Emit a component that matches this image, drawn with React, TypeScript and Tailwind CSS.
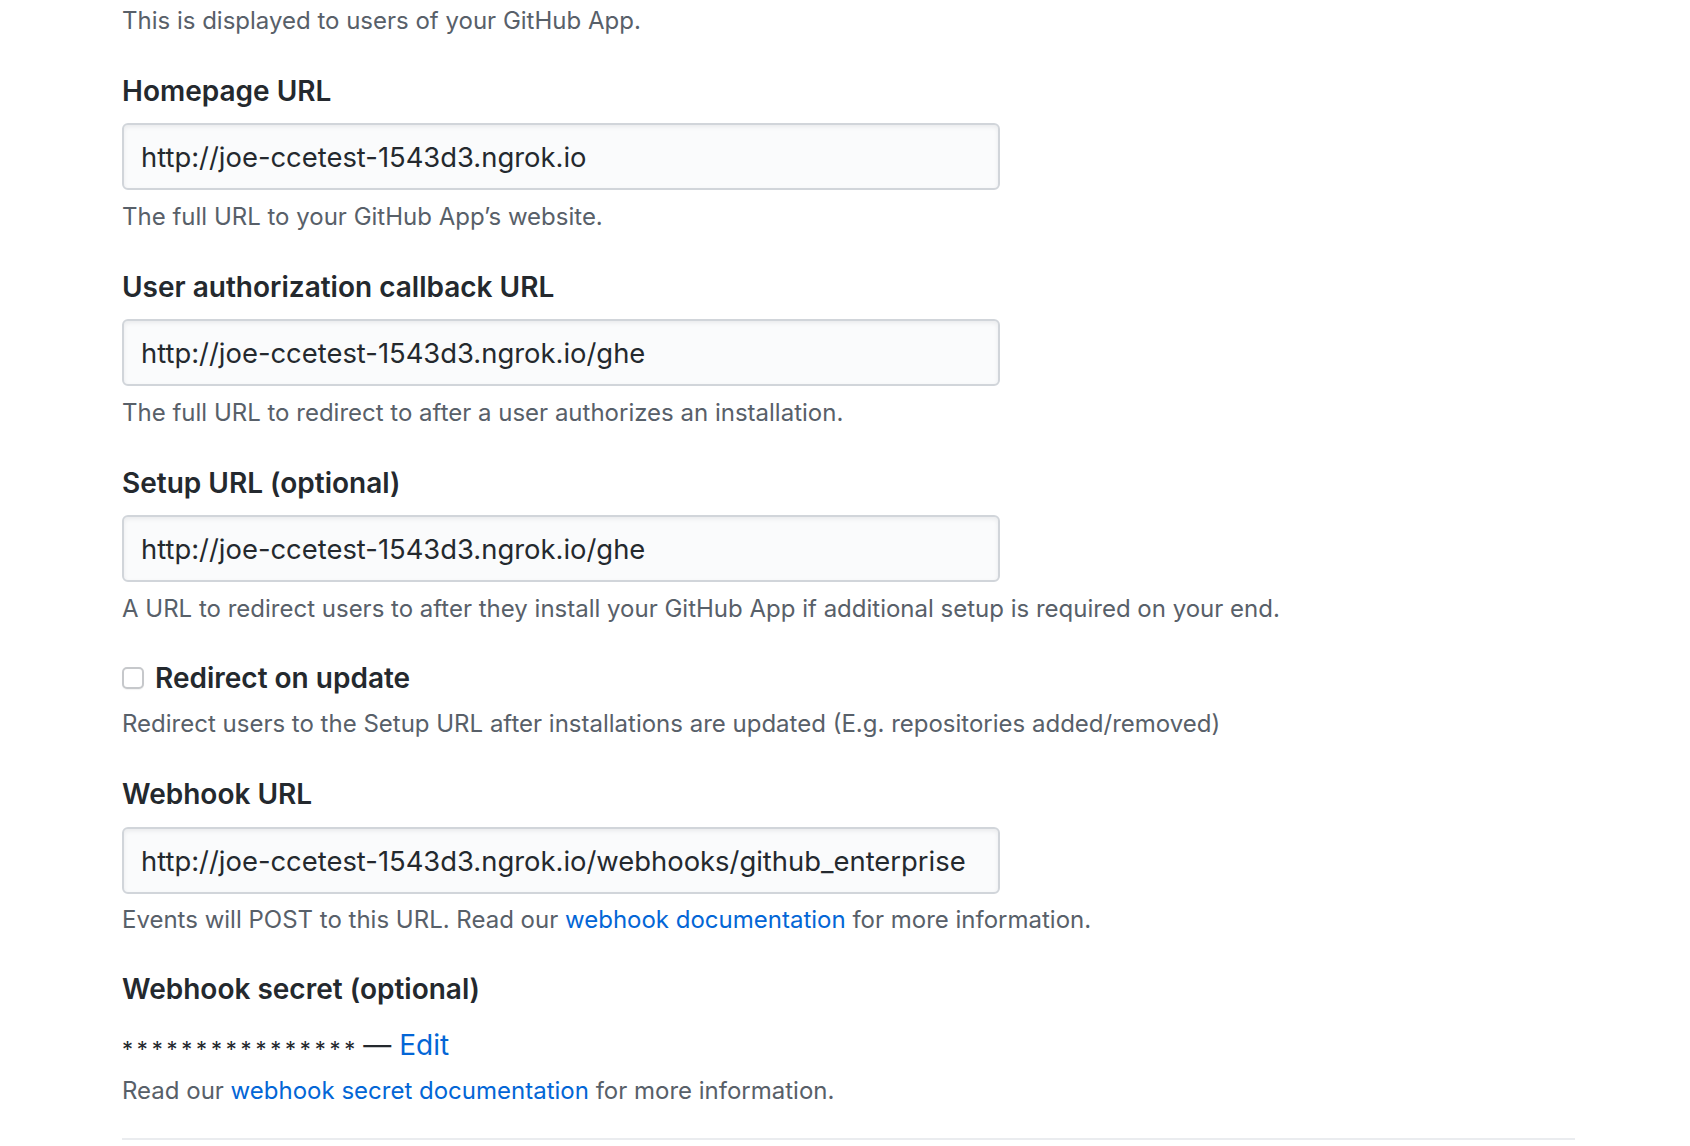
import React from "react";

interface FieldProps {
  label: string;
  value: string;
  children: React.ReactNode;
  className?: string;
}

function TextField({ label, value, children, className }: FieldProps) {
  return (
    <div className={className}>
      <label className="block text-[28px] leading-[40px] font-semibold text-[#24292e]">
        {label}
      </label>
      <input
        type="text"
        readOnly
        value={value}
        className="mt-[12px] block h-[67px] w-[878px] rounded-[6px] border-2 border-[#d1d5da] bg-[#fafbfc] px-[17px] text-[27.4px] text-[#24292e] shadow-[inset_0_2px_4px_rgba(27,31,35,0.075)] outline-none"
      />
      <p className="mt-[9px] text-[24px] leading-[36px] text-[#586069]">{children}</p>
    </div>
  );
}

export default function App() {
  return (
    <div className="min-h-screen bg-white pl-[122px] font-['Inter','Noto_Sans',sans-serif]">
      <div className="w-[1453px]">
        <p className="pt-[3px] text-[24px] leading-[36px] text-[#586069]">
          This is displayed to users of your GitHub App.
        </p>

        <TextField
          className="mt-[32px]"
          label="Homepage URL"
          value="http://joe-ccetest-1543d3.ngrok.io"
        >
          The full URL to your GitHub App’s website.
        </TextField>

        <TextField
          className="mt-[32px]"
          label="User authorization callback URL"
          value="http://joe-ccetest-1543d3.ngrok.io/ghe"
        >
          The full URL to redirect to after a user authorizes an installation.
        </TextField>

        <TextField
          className="mt-[32px]"
          label="Setup URL (optional)"
          value="http://joe-ccetest-1543d3.ngrok.io/ghe"
        >
          A URL to redirect users to after they install your GitHub App if additional setup is
          required on your end.
        </TextField>

        {/* redirect checkbox */}
        <div className="mt-[31px]">
          <label className="flex items-center gap-[11px] text-[28px] leading-[40px] font-semibold text-[#24292e]">
            <span className="h-[22px] w-[22px] rounded-[5px] border-2 border-[#c6c8cb] bg-white shadow-[0_1px_1px_rgba(0,0,0,0.05)]" />
            Redirect on update
          </label>
          <p className="mt-[8px] text-[24px] leading-[36px] text-[#586069]">
            Redirect users to the Setup URL after installations are updated (E.g. repositories
            added/removed)
          </p>
        </div>

        <div className="mt-[32px]">
          <label className="block text-[28px] leading-[40px] font-semibold text-[#24292e]">
            Webhook URL
          </label>
          <input
            type="text"
            readOnly
            value="http://joe-ccetest-1543d3.ngrok.io/webhooks/github_enterprise"
            className="mt-[13px] block h-[67px] w-[878px] rounded-[6px] border-2 border-[#d1d5da] bg-[#fafbfc] px-[17px] text-[27.4px] text-[#24292e] shadow-[inset_0_2px_4px_rgba(27,31,35,0.075)] outline-none"
          />
          <p className="mt-[8px] text-[24px] leading-[36px] text-[#586069]">
            Events will POST to this URL. Read our{" "}
            <a href="#" className="text-[#0366d6]">
              webhook documentation
            </a>{" "}
            for more information.
          </p>
        </div>

        <div className="mt-[31px]">
          <label className="block text-[28px] leading-[40px] font-semibold text-[#24292e]">
            Webhook secret (optional)
          </label>
          <div className="mt-[16px] flex items-center text-[28px] leading-[40px] text-[#24292e]">
            <span className="translate-y-[4px] text-[22px] tracking-[3.8px]">****************</span>
            <span className="ml-[4px]">—</span>
            <a href="#" className="ml-[8px] text-[#0366d6]">
              Edit
            </a>
          </div>
          <p className="mt-[8px] text-[24px] leading-[36px] text-[#586069]">
            Read our{" "}
            <a href="#" className="text-[#0366d6]">
              webhook secret documentation
            </a>{" "}
            for more information.
          </p>
        </div>

        <div className="mt-[29px] h-[2px] bg-[#eaecef]" />
      </div>
    </div>
  );
}
